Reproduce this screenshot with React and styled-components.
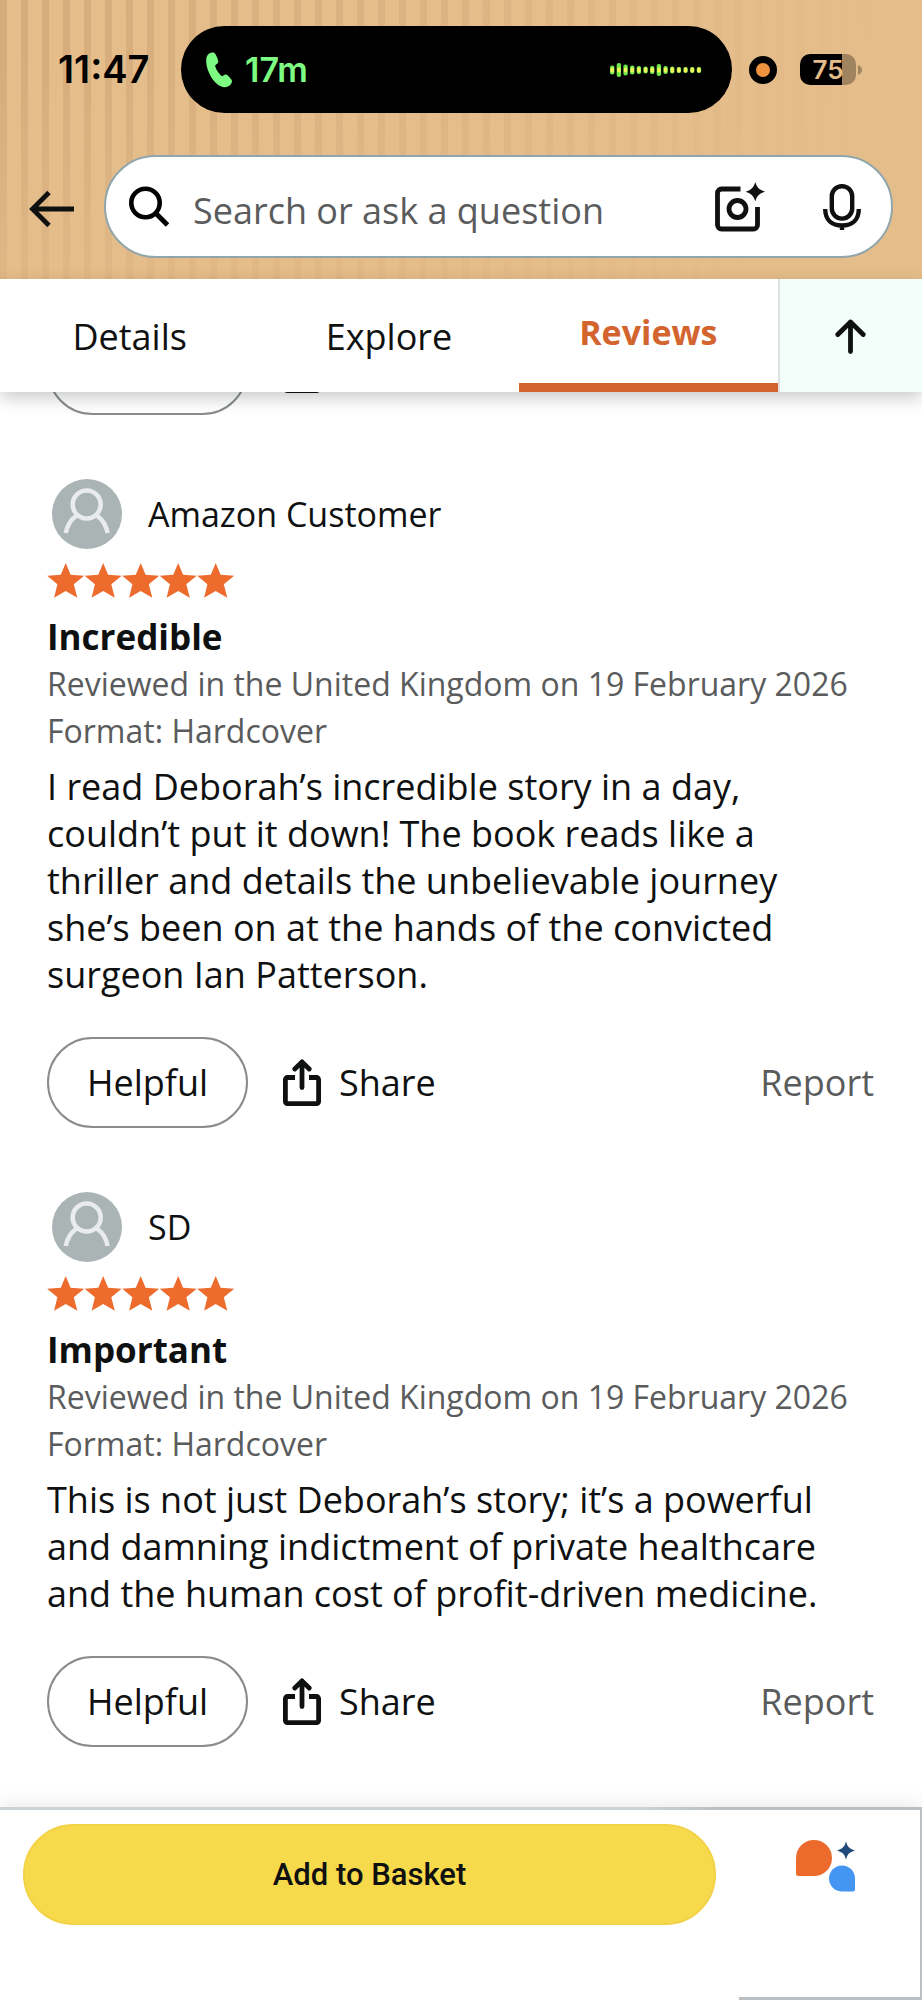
import { useState } from 'react';
import styled, { createGlobalStyle } from 'styled-components';

const GlobalStyle = createGlobalStyle`
  * {
    box-sizing: border-box;
  }
  body {
    margin: 0;
    background: #fff;
    color: #0f1111;
    font-family: 'Open Sans', 'Noto Sans', sans-serif;
    font-size: 36px;
    font-weight: 500;
    line-height: 47px;
  }
  button,
  input {
    font: inherit;
    color: inherit;
  }
  button {
    padding: 0;
    border: 0;
    background: none;
    cursor: pointer;
  }
  svg {
    display: block;
    flex: none;
  }
`;

const Page = styled.div`
  display: flex;
  flex-direction: column;
  min-height: 100vh;
`;

const Header = styled.header`
  padding: 26px 0 21px;
  background: linear-gradient(
      100deg,
      rgba(229, 189, 138, 0) 0%,
      rgba(229, 189, 138, 0.4) 45%,
      #e5bd8a 92%
    ),
    linear-gradient(to bottom, rgba(229, 189, 138, 0) 25%, rgba(229, 189, 138, 0.6) 100%),
    repeating-linear-gradient(to right, #d6ac7c 0 7px, #e5bd8a 7px 21px);
`;

const StatusBar = styled.div`
  display: flex;
  align-items: center;
  padding: 0 60px 0 58px;
  font-family: Inter, Roboto, sans-serif;
  font-weight: 600;
`;

const Time = styled.time`
  width: 123px;
  color: #000;
  font-size: 38px;
`;

const Island = styled.div`
  display: flex;
  flex: 1;
  align-items: center;
  gap: 13px;
  height: 87px;
  padding: 0 30px 0 25px;
  border-radius: 44px;
  background: #000;
  color: #7dfb82;
  font-size: 34px;
`;

const Wave = styled.svg`
  margin-left: auto;
`;

const Recording = styled.span`
  width: 28px;
  height: 28px;
  margin: 0 23px 0 17px;
  border: 7px solid #000;
  border-radius: 50%;
  background: #f09340;
`;

const Battery = styled.div`
  display: flex;
  align-items: center;
  gap: 2px;
`;

const BatteryLevel = styled.span`
  width: 56px;
  border-radius: 10px;
  background: linear-gradient(to right, #000 75%, #a0835f 75%);
  color: #e5bd8a;
  font-size: 26px;
  line-height: 31px;
  text-align: center;
`;

const SearchRow = styled.div`
  display: flex;
  align-items: center;
  gap: 30px;
  margin-top: 42px;
  padding: 0 29px;
`;

const SearchForm = styled.form`
  display: flex;
  flex: 1;
  align-items: center;
  min-width: 0;
  height: 103px;
  padding: 0 30px 0 23px;
  border: 2px solid #91a6ac;
  border-radius: 52px;
  background: #fff;
`;

const SearchInput = styled.input`
  flex: 1;
  min-width: 0;
  margin: 0 24px;
  padding: 8px 0 0;
  border: 0;
  outline: 0;
  background: none;
  font-weight: 400;

  &::placeholder {
    color: #5a5b5c;
    opacity: 1;
  }
`;

const SearchTools = styled.div`
  display: flex;
  align-items: center;
  gap: 58px;
`;

const TabBar = styled.nav`
  position: relative;
  display: flex;
  height: 113px;
  background: #fff;
  box-shadow: 0 6px 16px rgba(15, 17, 17, 0.22);
`;

const Tab = styled.button`
  flex: 1;
  padding-top: 2px;
  border-bottom: ${({ $active }) => ($active ? '9px solid #d3642d' : '0')};
  color: ${({ $active }) => ($active ? '#d3642d' : 'inherit')};
  font-size: ${({ $active }) => ($active ? '34px' : '36px')};
  font-weight: ${({ $active }) => ($active ? 700 : 400)};
`;

const TopButton = styled.button`
  display: flex;
  align-items: center;
  justify-content: center;
  width: 144px;
  border-left: 2px solid #dfe1e1;
  background: #f3fdfa;
`;

const Reviews = styled.main`
  display: flex;
  flex: 1;
  flex-direction: column;
  gap: 64px;
  padding: 0 48px 60px 47px;
`;

// Last row of the review that has scrolled under the tabs
const ScrolledReview = styled.div`
  display: flex;
  flex-direction: column;
  justify-content: flex-end;
  height: 23px;
  overflow: hidden;
`;

const Author = styled.div`
  display: flex;
  align-items: center;
  gap: 26px;
  padding-left: 5px;
  font-size: 34px;
  font-weight: 400;
`;

const Stars = styled.div`
  display: flex;
  margin: 14px 0 15px;
`;

const Title = styled.h2`
  margin: 0;
  font-size: 35px;
  font-weight: 700;
  line-height: 47px;
`;

const Meta = styled.p`
  margin: 0;
  color: #5a5b5c;
  font-size: 32px;
`;

const Body = styled.p`
  margin: 9px 0 39px;
  padding-right: 16px;
`;

const Actions = styled.div`
  display: flex;
  flex: none;
  align-items: center;
  height: 91px;
`;

const HelpfulButton = styled.button`
  width: 201px;
  height: 91px;
  border: 2px solid #888c8c;
  border-radius: 46px;
`;

const ShareButton = styled.button`
  display: flex;
  align-items: center;
  gap: 18px;
  margin-left: 35px;
`;

const ReportButton = styled.button`
  margin-left: auto;
  color: #5a5b5c;
`;

const BuyBar = styled.footer`
  display: flex;
  padding-top: 3px;
  background: linear-gradient(to right, #cbd2d5 70%, #b9bfc2 78%) top / 100% 3px no-repeat, #fff;
  box-shadow: 0 -4px 16px rgba(15, 17, 17, 0.08);
`;

const BasketArea = styled.div`
  flex: 1;
  padding: 14px 23px 75px;
`;

const BasketButton = styled.button`
  width: 100%;
  height: 101px;
  border: 2px solid #f3d247;
  border-radius: 51px;
  background: #f7d94c;
  font-family: Roboto, sans-serif;
  font-size: 31px;
  font-weight: 500;
`;

const AssistantButton = styled.button`
  display: flex;
  justify-content: center;
  width: 183px;
  padding: 30px 8px 0 0;
  border-right: 2px solid #b9bfc2;
  border-bottom: 3px solid #b9bfc2;
`;

const waveBars = [9, 14, 11, 9, 8, 7, 8, 12, 8, 7, 6, 6, 6, 6];

const WaveForm = () => (
  <Wave width="92" height="16" viewBox="0 0 92 16" aria-hidden="true">
    {waveBars.map((h, i) => (
      <g key={i}>
        <rect x={i * 6.67} y={8 - h / 2} width="4.4" height={h} rx="2" fill="#6fe84a" />
        <rect x={i * 6.67 + 0.6} y="5.4" width="3.2" height="5.2" rx="1.4" fill="#f4f45a" />
      </g>
    ))}
  </Wave>
);

const PhoneIcon = () => (
  <svg width="26" height="36" viewBox="0 0 26 36" aria-hidden="true">
    <path
      fill="#7dfb82"
      d="M3.2 1.6C5 .4 7.8 0 9 1.6c1.4 2 2.6 5 3.2 7.2.4 1.8-.6 2.8-2.2 3.8-1 .7-.9 1.6-.5 2.7 1.1 3 3 5.9 5.4 8.1.8.8 1.6.8 2.4.1 1.5-1.2 2.8-1.5 4.2-.3 1.4 1.2 2.8 2.8 3.9 4.4 1 1.6.6 3.4-.8 4.9-2 2.2-4.6 3.2-7.6 2.6C8.6 33.4.6 20.4.2 9.6.1 6.2.8 3.2 3.2 1.6z"
    />
  </svg>
);

const BackIcon = () => (
  <svg width="45" height="40" viewBox="0 0 45 40" fill="none" stroke="#0f1111" strokeWidth="4.8">
    <path d="M45 22H4M20 5.5L3.5 22 20 38.5" />
  </svg>
);

const SearchIcon = () => (
  <svg width="40" height="41" viewBox="0 0 40 41" fill="none" stroke="#000" strokeWidth="4.6" aria-hidden="true">
    <circle cx="16.5" cy="17" r="14.2" />
    <path d="M26.5 27L38.5 39" strokeWidth="5" />
  </svg>
);

const CameraIcon = () => (
  <svg width="50" height="50" viewBox="0 0 50 50" fill="none" stroke="#0f1111" strokeWidth="4.8">
    <path d="M25.5 7H6.5A4 4 0 0 0 2.5 11V43A4 4 0 0 0 6.5 47H38.5A4 4 0 0 0 42.5 43V25" />
    <circle cx="22.5" cy="27" r="8.5" />
    <path
      fill="#0f1111"
      stroke="none"
      d="M40.3 0C42 5.6 44.1 7.7 50 9.7 44.1 11.7 42 13.8 40.3 19.4 38.6 13.8 36.5 11.7 30.6 9.7 36.5 7.7 38.6 5.6 40.3 0z"
    />
  </svg>
);

const MicIcon = () => (
  <svg width="38" height="46" viewBox="0 0 38 46" fill="none" stroke="#0f1111" strokeWidth="4.4">
    <rect x="8.8" y="2.2" width="20.4" height="32.4" rx="10" />
    <path d="M2.2 25C2.2 36 9 41.5 19 41.5S35.8 36 35.8 25M19 40V46" />
  </svg>
);

const UpIcon = () => (
  <svg
    width="31"
    height="36"
    viewBox="0 0 31 36"
    fill="none"
    stroke="#0f1111"
    strokeWidth="4.8"
    strokeLinecap="round"
    strokeLinejoin="round"
  >
    <path d="M15.5 33.5V4M2.8 16.5L15.5 4 28.2 16.5" />
  </svg>
);

const ShareIcon = () => (
  <svg width="38" height="47" viewBox="0 0 38 47" fill="none" stroke="#0f1111" strokeWidth="4.8" aria-hidden="true">
    <path d="M12 18.5H4.4A2 2 0 0 0 2.4 20.5V42.6A2 2 0 0 0 4.4 44.6H33.6A2 2 0 0 0 35.6 42.6V20.5A2 2 0 0 0 33.6 18.5H26" />
    <path d="M19 28.5V3M11.8 10L19 2.9 26.2 10" strokeLinecap="round" strokeLinejoin="round" />
  </svg>
);

const Avatar = () => (
  <svg width="70" height="70" viewBox="0 0 70 70" aria-hidden="true">
    <circle cx="35" cy="35" r="35" fill="#aab4b5" />
    <g fill="none" stroke="#e9ebec" strokeWidth="4.6">
      <circle cx="34.7" cy="25.5" r="14" />
      <path d="M13.8 54C15 46.5 18.5 41 24.5 36.5M55.6 54C54.4 46.5 50.9 41 44.9 36.5" />
    </g>
  </svg>
);

const StarRating = () => (
  <Stars role="img" aria-label="5 out of 5 stars">
    <svg width="188" height="35" viewBox="0 0 188 35" fill="#ed6c2d">
      {[0, 1, 2, 3, 4].map((i) => (
        <path
          key={i}
          transform={`translate(${i * 37.5} 0)`}
          d="M18.7 0L23.6 11.8 37.2 12.7 26.8 21.2 30.3 34.7 18.7 28 7.1 34.7 10.4 21.2.2 12.7 13.8 11.8z"
        />
      ))}
    </svg>
  </Stars>
);

const AssistantIcon = () => (
  <svg width="59" height="52" viewBox="0 0 59 52">
    <path fill="#ec6b2c" d="M0 18A18 18 0 1 1 18 36H2.5A2.5 2.5 0 0 1 0 33.5z" />
    <path fill="#4496f2" d="M59 38.5A13 13 0 1 0 46 51.5H57A2 2 0 0 0 59 49.5z" />
    <path
      fill="#204a7b"
      d="M50 1.3C51.6 7.1 53.2 8.7 59 10.5 53.2 12.3 51.6 13.9 50 19.7 48.4 13.9 46.8 12.3 41 10.5 46.8 8.7 48.4 7.1 50 1.3z"
    />
  </svg>
);

const Review = ({ name, title, date, format, text }) => (
  <article>
    <Author>
      <Avatar />
      {name}
    </Author>
    <StarRating />
    <Title>{title}</Title>
    <Meta>{date}</Meta>
    <Meta>Format: {format}</Meta>
    <Body>{text}</Body>
    <Actions>
      <HelpfulButton type="button">Helpful</HelpfulButton>
      <ShareButton type="button">
        <ShareIcon />
        Share
      </ShareButton>
      <ReportButton type="button">Report</ReportButton>
    </Actions>
  </article>
);

const tabs = ['Details', 'Explore', 'Reviews'];

const reviews = [
  {
    name: 'Amazon Customer',
    title: 'Incredible',
    date: 'Reviewed in the United Kingdom on 19 February 2026',
    format: 'Hardcover',
    text: 'I read Deborah’s incredible story in a day, couldn’t put it down! The book reads like a thriller and details the unbelievable journey she’s been on at the hands of the convicted surgeon Ian Patterson.',
  },
  {
    name: 'SD',
    title: 'Important',
    date: 'Reviewed in the United Kingdom on 19 February 2026',
    format: 'Hardcover',
    text: 'This is not just Deborah’s story; it’s a powerful and damning indictment of private healthcare and the human cost of profit-driven medicine.',
  },
];

const App = () => {
  const [tabActive, setTabActive] = useState('Reviews');
  return (
    <Page>
      <GlobalStyle />
      <Header>
        <StatusBar>
          <Time>11:47</Time>
          <Island>
            <PhoneIcon />
            17m
            <WaveForm />
          </Island>
          <Recording />
          <Battery>
            <BatteryLevel>75</BatteryLevel>
            <svg width="4" height="10" viewBox="0 0 4 10" fill="#a0835f" aria-hidden="true">
              <path d="M0 0C2.5 1 4 3 4 5S2.5 9 0 10z" />
            </svg>
          </Battery>
        </StatusBar>
        <SearchRow>
          <button type="button" aria-label="Back">
            <BackIcon />
          </button>
          <SearchForm role="search" onSubmit={(e) => e.preventDefault()}>
            <SearchIcon />
            <SearchInput
              type="text"
              aria-label="Search or ask a question"
              placeholder="Search or ask a question"
            />
            <SearchTools>
              <button type="button" aria-label="Search by image">
                <CameraIcon />
              </button>
              <button type="button" aria-label="Search by voice">
                <MicIcon />
              </button>
            </SearchTools>
          </SearchForm>
        </SearchRow>
      </Header>
      <TabBar>
        {tabs.map((tab) => (
          <Tab
            key={tab}
            type="button"
            $active={tabActive === tab}
            onClick={() => setTabActive(tab)}
          >
            {tab}
          </Tab>
        ))}
        <TopButton type="button" aria-label="Back to top">
          <UpIcon />
        </TopButton>
      </TabBar>
      <Reviews>
        <ScrolledReview>
          <Actions>
            <HelpfulButton type="button" aria-label="Helpful" />
            <ShareButton type="button" aria-label="Share">
              <ShareIcon />
            </ShareButton>
          </Actions>
        </ScrolledReview>
        {reviews.map((review) => (
          <Review key={review.name} {...review} />
        ))}
      </Reviews>
      <BuyBar>
        <BasketArea>
          <BasketButton type="button">Add to Basket</BasketButton>
        </BasketArea>
        <AssistantButton type="button" aria-label="Shopping assistant">
          <AssistantIcon />
        </AssistantButton>
      </BuyBar>
    </Page>
  );
};

export default App;
